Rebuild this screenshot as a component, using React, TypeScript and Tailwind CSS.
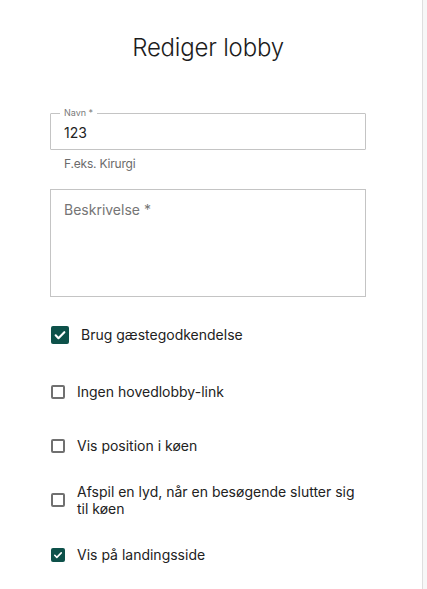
import React from "react";

const Check = () => (
  <svg viewBox="0 0 24 24" className="w-full h-full" fill="none" stroke="white" strokeWidth="3.2" strokeLinecap="round" strokeLinejoin="round">
    <path d="M5.5 12.5l4.2 4.2L18.5 7.8" />
  </svg>
);

function Box({ checked, big }: { checked?: boolean; big?: boolean }) {
  const size = big ? "w-[18px] h-[18px]" : "w-[14px] h-[14px]";
  if (checked) {
    return <div className={`${size} shrink-0 rounded-[2px] bg-[#0d514a] p-[1px]`}><Check /></div>;
  }
  return <div className={`${size} shrink-0 rounded-[2px] border-2 border-[#707070]`} />;
}

export default function App() {
  return (
    <div className="flex w-[427px] h-[589px] bg-[#f7f7f7]" style={{ fontFamily: "Inter, 'Noto Sans', sans-serif" }}>
      <div className="w-[423px] h-full bg-white border-r border-[#dedede] pl-[50px] pr-[56px]">
        <h1 className="text-center text-[24px] font-light text-[#1c1c1c] pt-[33px] leading-[30px] tracking-[-0.2px]">Rediger lobby</h1>
        <div className="relative mt-[50px] h-[37px] border border-[#c4c4c4] rounded-[1px] flex items-center px-[13px]">
          <span className="absolute -top-[8px] left-[9px] bg-white px-[4px] text-[9px] leading-[14px] text-[#7a7a7a]">Navn *</span>
          <span className="text-[14px] text-[#222] pt-[1px]">123</span>
        </div>
        <div className="pl-[14px] pt-[6px] text-[12px] leading-[16px] text-[#6b6b6b] tracking-[-0.2px]">F.eks. Kirurgi</div>
        <div className="mt-[17px] h-[108px] border border-[#c4c4c4] px-[13px] pt-[7px]">
          <span className="text-[14px] text-[#757575]">Beskrivelse *</span>
        </div>
        <div className="mt-[27px] flex items-center gap-[12px] pl-[1px]">
          <Box checked big />
          <span className="text-[14px] text-[#222]">Brug gæstegodkendelse</span>
        </div>
        <div className="mt-[36px] flex items-center gap-[12px] pl-[1px]">
          <Box />
          <span className="text-[14px] text-[#222]">Ingen hovedlobby-link</span>
        </div>
        <div className="mt-[33px] flex items-center gap-[12px] pl-[1px]">
          <Box />
          <span className="text-[14px] text-[#222]">Vis position i køen</span>
        </div>
        <div className="mt-[27px] flex items-center gap-[12px] pl-[1px]">
          <Box />
          <span className="text-[14px] leading-[17px] text-[#222] w-[280px]">Afspil en lyd, når en besøgende slutter sig til køen</span>
        </div>
        <div className="mt-[27px] flex items-center gap-[12px] pl-[1px]">
          <Box checked />
          <span className="text-[14px] text-[#222]">Vis på landingsside</span>
        </div>
      </div>
    </div>
  );
}
